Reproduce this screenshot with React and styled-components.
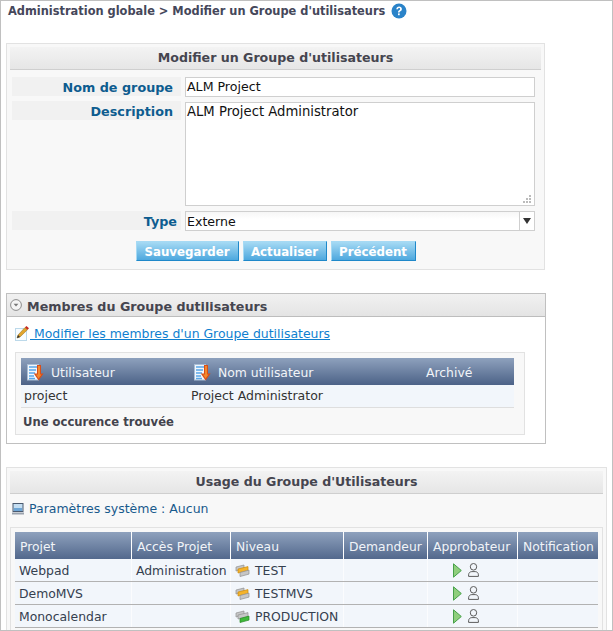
import React from "react";
import styled, { createGlobalStyle } from "styled-components";

const Global = createGlobalStyle`
  html, body { margin: 0; padding: 0; background: #fff; }
  body { font-family: "DejaVu Sans", Verdana, sans-serif; font-size: 12.5px; color: #333; }
`;

const Frame = styled.div`
  box-sizing: border-box;
  width: 613px;
  height: 631px;
  border: 1px solid #c0c0c0;
  padding-left: 5px;
  overflow: hidden;
  background: #fff;
`;

const Crumb = styled.div`
  height: 42px;
  padding-left: 2px;
  display: flex;
  align-items: flex-start;
  gap: 6px;
  font-size: 11.4px;
  font-weight: bold;
  color: #45475a;
  line-height: 20px;
  white-space: nowrap;
`;

const Panel = styled.section`
  box-sizing: border-box;
  width: ${(p) => p.$width}px;
  margin-top: ${(p) => p.$top || 0}px;
  border: 1px solid #e2e2e2;
  background: #f8f8f8;
  padding: 3px 3px 8px;
`;

const PanelTitle = styled.h2`
  box-sizing: border-box;
  margin: 0;
  height: 23px;
  line-height: 22px;
  font-size: 12.6px;
  font-weight: bold;
  text-align: center;
  color: #45454f;
  background: linear-gradient(#f3f3f3, #e6e6e6);
  border-bottom: 1px solid #cfcfcf;
`;

const Form = styled.div`
  display: grid;
  grid-template-columns: 169px 350px;
  column-gap: 4px;
  row-gap: 4px;
  padding: 7px 0 0 2px;
`;

const Label = styled.div`
  box-sizing: border-box;
  height: 19px;
  line-height: 21px;
  padding-right: ${(p) => p.$pad ?? 8}px;
  text-align: right;
  font-size: 12.75px;
  background: #f1f1f1;
  font-weight: bold;
  color: #0d5c8f;
`;

const TextInput = styled.div`
  box-sizing: border-box;
  height: 20px;
  line-height: 18px;
  padding-left: 1px;
  font-size: 12.6px;
  background: #fff;
  border: 1px solid #cfcfcf;
  color: #111;
`;

const TextArea = styled.div`
  position: relative;
  box-sizing: border-box;
  height: 104px;
  margin: 1px 0;
  line-height: 18px;
  padding-left: 1px;
  font-size: 13.2px;
  background: #fff;
  border: 1px solid #cfcfcf;
  color: #111;
`;

const Grip = styled.svg`
  position: absolute;
  right: 2px;
  bottom: 2px;
`;

const Select = styled.div`
  box-sizing: border-box;
  height: 20px;
  line-height: 20px;
  padding-left: 1px;
  font-size: 12.6px;
  display: flex;
  justify-content: space-between;
  background: linear-gradient(#f6f6f6, #fff 40%);
  border: 1px solid #cfcfcf;
  color: #111;
`;

const Arrow = styled.span`
  width: 14px;
  border-left: 1px solid #cfcfcf;
  background: #fff;
  display: flex;
  align-items: center;
  justify-content: center;
`;

const Buttons = styled.div`
  display: flex;
  justify-content: center;
  gap: 4px;
  margin-top: 10px;
`;

const Button = styled.button`
  box-sizing: border-box;
  height: 20px;
  width: ${(p) => p.$w}px;
  padding: 2px 0 0;
  font: bold 11.8px "DejaVu Sans", Verdana, sans-serif;
  color: #fff;
  text-shadow: 0 0 1px #7fbfe6;
  background: linear-gradient(#a6daf4, #4ea8de);
  border: 1px solid #a6daf4;
  border-right-color: #1f88c9;
  border-bottom-color: #1f88c9;
`;

const MemberPanel = styled.section`
  box-sizing: border-box;
  width: 540px;
  height: 151px;
  margin-top: 23px;
  border: 1px solid #c0c0c0;
  background: #fff;
`;

const CollapseTitle = styled.h2`
  box-sizing: border-box;
  margin: 0;
  height: 23px;
  padding: 2px 0 0 3px;
  display: flex;
  align-items: center;
  gap: 5px;
  font-size: 12.7px;
  font-weight: bold;
  color: #45454f;
  background: linear-gradient(#f1f1f1, #e4e4e4);
  border-bottom: 1px solid #bdbdbd;
`;

const LinkRow = styled.div`
  box-sizing: border-box;
  display: flex;
  align-items: center;
  height: 35px;
  padding: 0 0 2px 8px;
`;

const Link = styled.a`
  color: #0f7fcf;
  text-decoration: underline;
  white-space: pre;
  font-size: 12.45px;
`;

const Inner = styled.div`
  box-sizing: border-box;
  border: 1px solid #e2e2e2;
  background: #f8f8f8;
  padding: ${(p) => p.$pad};
  margin-left: ${(p) => p.$left}px;
  width: ${(p) => p.$width}px;
`;

const MemberHead = styled.div`
  display: grid;
  grid-template-columns: 167px 235px 91px;
  height: 27px;
  align-items: center;
  color: #f1f4f8;
  font-size: 12.4px;
  background: linear-gradient(#8ea1bd, #4c6287);
`;

const SortHead = styled.div`
  display: flex;
  align-items: center;
  gap: 7px;
  line-height: 29px;
  padding-left: ${(p) => p.$pad}px;
`;

const MemberRow = styled.div`
  display: grid;
  grid-template-columns: 167px 235px 91px;
  box-sizing: border-box;
  height: 23px;
  line-height: 22px;
  padding-left: 3px;
  background: #f2f6fb;
  border-bottom: 1px solid #dedede;
`;

const Count = styled.div`
  height: 26px;
  padding-left: 2px;
  line-height: 29px;
  font-weight: bold;
  font-size: 11.6px;
  color: #43434d;
`;

const SysRow = styled.div`
  box-sizing: border-box;
  display: flex;
  align-items: center;
  gap: 5px;
  height: 33px;
  padding: 0 0 4px 2px;
  color: #185a8c;
`;

const GridHead = styled.div`
  display: grid;
  grid-template-columns: 116px 98px 112px 83px 89px 80px;
  column-gap: 1px;
  width: 583px;
  height: 27px;
  background: #fff;
`;

const HeadCell = styled.div`
  padding-left: 5px;
  line-height: 30px;
  color: #f1f4f8;
  white-space: nowrap;
  font-size: 12.35px;
  background: linear-gradient(#8ea1bd, #4c6287);
`;

const GridRow = styled.div`
  display: grid;
  grid-template-columns: 116px 98px 112px 83px 89px 80px;
  column-gap: 1px;
  width: 583px;
  height: 23px;
  background: #fbfcfe;
  border-bottom: 1px solid #b2b2b2;
  box-sizing: border-box;
`;

const Cell = styled.div`
  display: flex;
  align-items: center;
  gap: ${(p) => p.$gap || 0}px;
  padding-left: ${(p) => p.$pad ?? 4}px;
  background: #f2f6fb;
  color: #35404f;
  font-size: 12.4px;
  white-space: nowrap;
`;

const Help = () => (
  <svg width="16" height="16" viewBox="0 0 16 16" style={{ marginTop: 2 }}>
    <circle cx="8" cy="8" r="7.5" fill="#2a83c9" />
    <path d="M5.3 6.2C5.4 4.4 6.6 3.5 8.1 3.5c1.6 0 2.8.9 2.8 2.4 0 1.2-.7 1.8-1.5 2.3-.6.4-.8.7-.8 1.4H7c0-1.2.3-1.8 1.1-2.3.7-.5 1-.8 1-1.3 0-.6-.4-1-1-1-.7 0-1.1.4-1.2 1.2z" fill="#fff" />
    <rect x="7" y="10.4" width="1.7" height="1.8" fill="#fff" />
  </svg>
);

const CollapseIcon = () => (
  <svg width="12" height="12" viewBox="0 0 12 12" style={{ marginTop: -2 }}>
    <circle cx="6" cy="6" r="5.4" fill="#f4f4f4" stroke="#8c8c8c" />
    <path d="M3.6 4.8h4.8L6 7.6z" fill="#777" />
  </svg>
);

const PencilIcon = () => (
  <svg width="15" height="15" viewBox="0 0 15 15">
    <rect x="0.5" y="2.5" width="11" height="12" fill="#f8fcff" stroke="#bcd9ea" />
    <path d="M2 12l1-3L10 1.5l2.5 2.2L5 11z" fill="#e2a52c" stroke="#8a6a20" strokeWidth=".5" />
    <path d="M10 1.5L11.4 0 14 2.2l-1.5 1.5z" fill="#c8281e" />
    <path d="M2 12l1-3 2 2z" fill="#333" />
  </svg>
);

const SortIcon = () => (
  <svg width="17" height="17" viewBox="0 0 17 17" style={{ flex: "none" }}>
    <rect x="0.5" y="0.5" width="11" height="15.5" fill="#f2f7fc" stroke="#a9bed6" />
    <path d="M2 3h8M2 6h7M2 9h6M2 12h5M2 14.5h6" stroke="#58a6e8" strokeWidth="1.5" />
    <path d="M10 1h4v8.5h2.6L11.6 16.5 6.8 9.5H10z" fill="#d94e18" />
    <path d="M11 2h2v8.5h1.4L11.6 14.4 9 10.5h2z" fill="#f2882c" />
  </svg>
);

const MonitorIcon = () => (
  <svg width="12" height="12" viewBox="0 0 12 12">
    <rect x="1" y="0.5" width="10" height="8" fill="#c4def2" stroke="#4a5a70" />
    <rect x="2" y="5" width="8" height="3" fill="#6ea6d6" />
    <rect x="0" y="9.5" width="12" height="2" fill="#9aa2ad" />
  </svg>
);

const Plate = ({ d, fill, edge }) => <path d={d} fill={fill} stroke={edge} strokeWidth=".7" />;

const LevelIcon = ({ active, color, edge }) => {
  const gray = "#c6c6c6";
  const line = "#8f8f8f";
  return (
    <svg width="15" height="13" viewBox="0 0 15 13" style={{ flex: "none" }}>
      <Plate d="M1 3l8-2v4L1 7z" fill={gray} edge={line} />
      <Plate d="M3 5l10-2.4v4L3 9z" fill={active === 1 ? color : gray} edge={active === 1 ? edge : line} />
      <Plate d="M5 8.5l9-2.4v4L5 12.5z" fill={active === 2 ? color : gray} edge={active === 2 ? edge : line} />
    </svg>
  );
};

const PlayIcon = () => (
  <svg width="9" height="15" viewBox="0 0 9 15" style={{ flex: "none" }}>
    <path d="M.5.8L8.3 7.5.5 14.2z" fill="#8fce7c" stroke="#46a04a" />
  </svg>
);

const UserIcon = () => (
  <svg width="11" height="14" viewBox="0 0 11 14" style={{ flex: "none" }}>
    <ellipse cx="5.5" cy="3.8" rx="3.2" ry="3.3" fill="none" stroke="#5c5c5c" />
    <path d="M.6 13.4v-1.6c0-2 1.6-3.2 3.2-3.2h3.4c1.6 0 3.2 1.2 3.2 3.2v1.6z" fill="none" stroke="#5c5c5c" />
  </svg>
);

const cols = ["Projet", "Accès Projet", "Niveau", "Demandeur", "Approbateur", "Notification"];
const rows = [
  { p: "Webpad", a: "Administration", n: "TEST", i: 1, c: "#f5b32a", e: "#c98a10" },
  { p: "DemoMVS", a: "", n: "TESTMVS", i: 1, c: "#f5b32a", e: "#c98a10" },
  { p: "Monocalendar", a: "", n: "PRODUCTION", i: 2, c: "#3fb83a", e: "#268a24" },
];

export default function App() {
  return (
    <Frame>
      <Global />
      <Crumb>
        <span>Administration globale &gt; Modifier un Groupe d'utilisateurs</span>
        <Help />
      </Crumb>

      <Panel $width={539}>
        <PanelTitle>Modifier un Groupe d'utilisateurs</PanelTitle>
        <Form>
          <Label>Nom de groupe</Label>
          <TextInput>ALM Project</TextInput>
          <Label>Description</Label>
          <TextArea>
            ALM Project Administrator
            <Grip width="9" height="9" viewBox="0 0 9 9">
              <path d="M6 1h2v2H6zM3 4h2v2H3zM6 4h2v2H6zM0 7h2v2H0zM3 7h2v2H3zM6 7h2v2H6z" fill="#bbb" />
            </Grip>
          </TextArea>
          <Label $pad={4}>Type</Label>
          <Select>
            Externe
            <Arrow>
              <svg width="8" height="6" viewBox="0 0 8 6"><path d="M0 0h8L4 6z" fill="#333" /></svg>
            </Arrow>
          </Select>
        </Form>
        <Buttons>
          <Button $w={103}>Sauvegarder</Button>
          <Button $w={84}>Actualiser</Button>
          <Button $w={85}>Précédent</Button>
        </Buttons>
      </Panel>

      <MemberPanel>
        <CollapseTitle>
          <CollapseIcon />
          Membres du Groupe dutilisateurs
        </CollapseTitle>
        <LinkRow>
          <PencilIcon />
          <Link href="#"> Modifier les membres d'un Groupe dutilisateurs</Link>
        </LinkRow>
        <Inner $left={8} $width={510} $pad="5px 10px 0 5px">
          <MemberHead>
            <SortHead $pad={6}><SortIcon />Utilisateur</SortHead>
            <SortHead $pad={6}><SortIcon />Nom utilisateur</SortHead>
            <SortHead $pad={3}>Archivé</SortHead>
          </MemberHead>
          <MemberRow>
            <span>project</span>
            <span>Project Administrator</span>
            <span />
          </MemberRow>
          <Count>Une occurence trouvée</Count>
        </Inner>
      </MemberPanel>

      <Panel $width={601} $top={23}>
        <PanelTitle>Usage du Groupe d'Utilisateurs</PanelTitle>
        <SysRow>
          <MonitorIcon />
          Paramètres système : Aucun
        </SysRow>
        <Inner $left={0} $width={593} $pad="4px">
          <GridHead>
            {cols.map((c) => (
              <HeadCell key={c}>{c}</HeadCell>
            ))}
          </GridHead>
          {rows.map((r) => (
            <GridRow key={r.p}>
              <Cell>{r.p}</Cell>
              <Cell>{r.a}</Cell>
              <Cell $gap={5} $pad={4}>
                <LevelIcon active={r.i} color={r.c} edge={r.e} />
                {r.n}
              </Cell>
              <Cell />
              <Cell $gap={6} $pad={25}>
                <PlayIcon />
                <UserIcon />
              </Cell>
              <Cell />
            </GridRow>
          ))}
        </Inner>
      </Panel>
    </Frame>
  );
}
